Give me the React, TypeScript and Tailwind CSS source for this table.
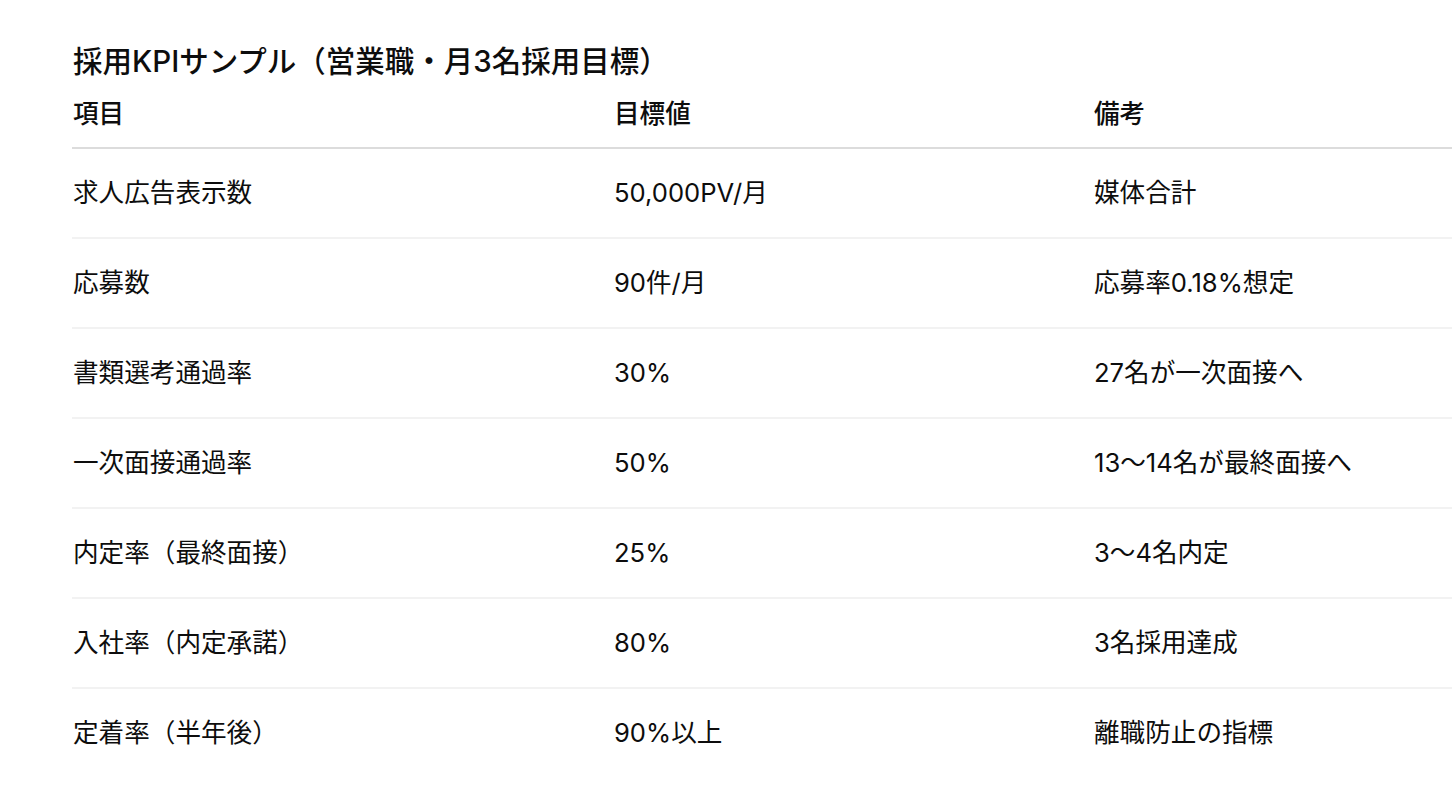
import React from "react";

const rows = [
  ["求人広告表示数", "50,000PV/月", "媒体合計"],
  ["応募数", "90件/月", "応募率0.18%想定"],
  ["書類選考通過率", "30%", "27名が一次面接へ"],
  ["一次面接通過率", "50%", "13〜14名が最終面接へ"],
  ["内定率（最終面接）", "25%", "3〜4名内定"],
  ["入社率（内定承諾）", "80%", "3名採用達成"],
  ["定着率（半年後）", "90%以上", "離職防止の指標"],
];

export default function App() {
  return (
    <div
      className="min-h-screen w-full overflow-hidden bg-white text-[#0d0d0d]"
      style={{ fontFamily: 'Inter, "Noto Sans CJK JP", sans-serif' }}
    >
      <div className="pl-[72px] pt-[41px]">
        <h3 className="text-[29.5px] font-medium leading-[40px] pl-px">
          採用KPIサンプル（営業職・月3名採用目標）
        </h3>
        <table className="mt-[14px] w-[1500px] table-fixed border-collapse text-[25.6px]">
          <colgroup>
            <col className="w-[542px]" />
            <col className="w-[480px]" />
            <col className="w-[478px]" />
          </colgroup>
          <thead>
            <tr className="border-b-2 border-[#dcdcdc]">
              <th className="pl-px pb-[14px] text-left font-medium leading-[38px]">項目</th>
              <th className="pb-[14px] text-left font-medium leading-[38px]">目標値</th>
              <th className="pb-[14px] text-left font-medium leading-[38px]">備考</th>
            </tr>
          </thead>
          <tbody>
            {rows.map((r, i) => (
              <tr
                key={i}
                className={i < rows.length - 1 ? "border-b-2 border-[#f2f2f2]" : ""}
              >
                <td className="pl-px py-[25px] leading-[38px]">{r[0]}</td>
                <td className="py-[25px] leading-[38px]">{r[1]}</td>
                <td className="py-[25px] leading-[38px]">{r[2]}</td>
              </tr>
            ))}
          </tbody>
        </table>
      </div>
    </div>
  );
}
